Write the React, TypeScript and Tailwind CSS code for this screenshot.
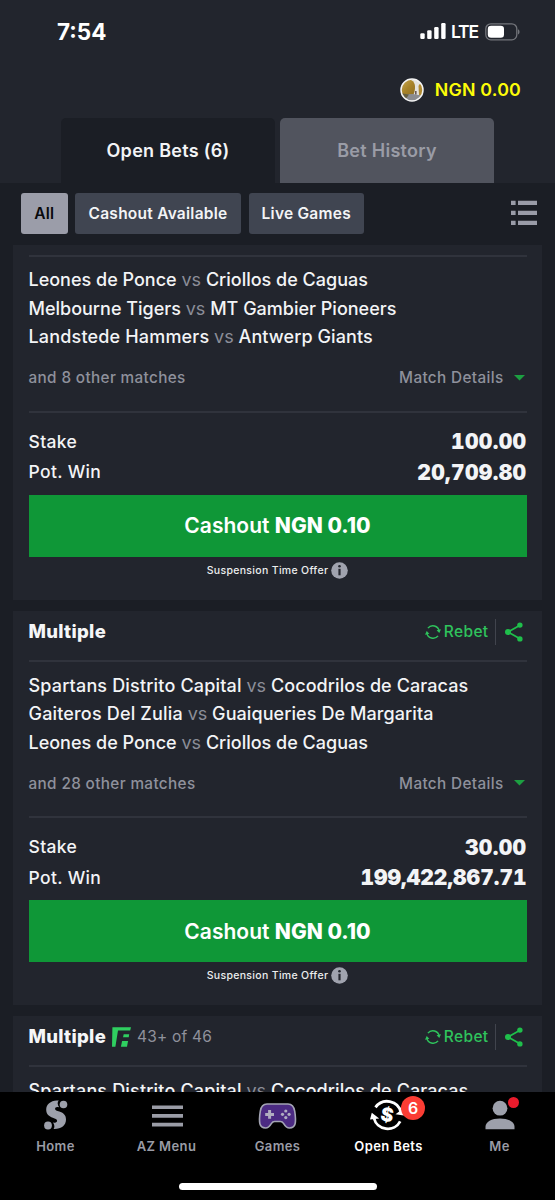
import { ReactNode } from "react";

type Match = { home: string; away: string; wide?: boolean };

function StatusBar() {
  return (
    <div className="flex h-[62px] items-center justify-between pt-px pr-[35px] pl-[57px] text-white">
      <span className="text-[22.5px] font-bold">7:54</span>
      <div className="flex items-center">
        <svg className="mb-px" width="26" height="16" viewBox="0 0 26 16" fill="currentColor">
          <rect x="0.3" y="10.2" width="4.4" height="5.8" rx="1.2" />
          <rect x="7.2" y="7.2" width="4.4" height="8.8" rx="1.2" />
          <rect x="14.2" y="4" width="4.4" height="12" rx="1.2" />
          <rect x="21.2" y="0" width="4.4" height="16" rx="1.2" />
        </svg>
        <span className="ml-[5px] pt-px text-[17.5px] font-semibold tracking-[-1.1px]">LTE</span>
        <svg className="ml-[7px]" width="35" height="18" viewBox="0 0 35 18">
          <rect x="0.8" y="0.8" width="31" height="16" rx="5" fill="none" stroke="#73757b" strokeWidth="1.3" />
          <rect x="2.8" y="2.8" width="16.2" height="12" rx="3.3" fill="#fff" />
          <path d="M33 6.3c2 .8 2 4.400 0 5.200z" fill="#73757b" />
        </svg>
      </div>
    </div>
  );
}

function Avatar() {
  return (
    <svg width="24" height="24" viewBox="0 0 24 24">
      <defs>
        <clipPath id="avatar">
          <circle cx="12" cy="12" r="10.8" />
        </clipPath>
        <linearGradient id="foliage" x1="0" y1="0" x2="1" y2="1">
          <stop offset="0" stopColor="#c9ab55" />
          <stop offset="0.5" stopColor="#a8842a" />
          <stop offset="1" stopColor="#8d6d22" />
        </linearGradient>
      </defs>
      <g clipPath="url(#avatar)">
        <rect width="24" height="24" fill="#e4e3df" />
        <path d="M0 2h11c3 1.500 4 4 4 7 0 3-.5 5-1.500 7.500L0 18z" fill="url(#foliage)" />
        <path d="M18.500 8c.5-2 2-3.500 5.500-3v14l-5-1.500z" fill="#b08b33" />
        <path d="M0 16.500l13-.5 11 2v6H0z" fill="#8b8c90" />
        <path d="M0 15l9 1.500L5 22H0z" fill="#665f40" />
        <path d="M15 13h1.600v3.500H15z" fill="#6a5a57" />
      </g>
      <circle cx="12" cy="12" r="11" fill="none" stroke="#f4f4f4" strokeWidth="1.500" />
    </svg>
  );
}

function ListIcon() {
  return (
    <svg className="mb-[2px]" width="26" height="26" viewBox="0 0 26 26" fill="#9a9ca8">
      <path d="M0 .7h4.600v4.400H0zM7 .7h19v4.400H7zM0 10.700h4.600v4.400H0zM7 10.700h19v4.400H7zM0 20.700h4.600v4.400H0zM7 20.700h19v4.400H7z" />
    </svg>
  );
}

function RebetIcon() {
  return (
    <svg width="16" height="16" viewBox="0 0 16 16" fill="none" stroke="#2fc35c" strokeWidth="1.400">
      <path d="M2.900 4.100A6.400 6.400 0 0 1 14.200 7.200" />
      <path d="M13.100 11.900A6.400 6.400 0 0 1 1.800 8.800" />
      <path d="M11.600 6.200l4.400-.9-1.700 3.600z" fill="#2fc35c" stroke="none" />
      <path d="M4.400 9.800L0 10.700l1.700-3.600z" fill="#2fc35c" stroke="none" />
    </svg>
  );
}

function ShareIcon() {
  return (
    <svg width="18" height="20" viewBox="0 0 18 20" fill="#1fbf4b" stroke="#1fbf4b">
      <path d="M15 3.200L3 10l12 6.800" fill="none" strokeWidth="1.700" />
      <circle cx="14.900" cy="3.100" r="2.700" stroke="none" />
      <circle cx="3" cy="10" r="3" stroke="none" />
      <circle cx="14.900" cy="16.900" r="2.700" stroke="none" />
    </svg>
  );
}

function FlexIcon() {
  return (
    <svg className="ml-[6px]" width="19" height="20" viewBox="0 0 19 20" fill="#2fcf60">
      <path d="M.4.200H19l-.8 3.300H6L3.400 19.800H0z" />
      <path d="M11.700 7.200h5.500l-.5 3.100H11z" />
      <path d="M10.100 14h6l-1.100 5.800H8.900z" />
    </svg>
  );
}

function InfoIcon() {
  return (
    <svg className="ml-[3px]" width="17" height="17" viewBox="0 0 17 17">
      <circle cx="8.500" cy="8.500" r="8.300" fill="#a0a3ae" />
      <circle cx="8.500" cy="4.300" r="1.300" fill="#252830" />
      <path d="M7.400 6.800h2.200v6.500H7.400z" fill="#252830" />
    </svg>
  );
}

function CardHeader({ children }: { children?: ReactNode }) {
  return (
    <div className="flex h-[49px] items-center justify-between pb-[7px]">
      <div className="flex items-center">
        <span className="pb-px text-[18.5px] font-extrabold tracking-[0.3px] text-[#f5f6f8]">Multiple</span>
        {children}
      </div>
      <div className="flex items-center pr-[4px]">
        <RebetIcon />
        <span className="ml-[3px] text-[15.5px] font-medium tracking-[0.35px] text-[#2fc35c]">Rebet</span>
        <span className="ml-[6px] h-[26px] w-px bg-[#41444d]" />
        <span className="ml-[9px]">
          <ShareIcon />
        </span>
      </div>
    </div>
  );
}

function Matches({ items }: { items: Match[] }) {
  return (
    <div className="border-t-2 border-[#30333c] pt-[9.5px]">
      {items.map(({ home, away, wide }) => (
        <p key={home} className="h-[28.5px] text-[18px] leading-[28.5px] font-medium whitespace-nowrap text-[#f3f4f6]">
          <span className={wide ? "tracking-[0.17px]" : ""}>{home}</span> <span className="font-normal text-[#8b8d98]">vs</span>{" "}
          <span className={wide ? "tracking-[0.08px]" : ""}>{away}</span>
        </p>
      ))}
    </div>
  );
}

function TotalRow({ label, value }: { label: string; value: string }) {
  const tracking = value.length > 10 ? "tracking-[0.02px]" : "tracking-[0.35px]";
  return (
    <div className="flex h-[30.5px] items-center justify-between text-[#f3f4f6]">
      <span className="text-[17.5px] font-medium tracking-[0.35px]">{label}</span>
      <span className={`text-[21px] font-black tabular-nums ${tracking}`}>{value}</span>
    </div>
  );
}

function Totals({ others, stake, win }: { others: number; stake: string; win: string }) {
  return (
    <>
      <div className="mt-[13px] flex h-[28px] items-center justify-between text-[15.3px] font-medium tracking-[0.36px] text-[#8f919c]">
        <span>and {others} other matches</span>
        <span className="flex items-center pr-[2px]">
          Match Details
          <svg className="mb-[2px] ml-[10px]" width="11" height="6" viewBox="0 0 11 6" fill="#1c9f41">
            <path d="M0 0h11L5.500 5.500z" />
          </svg>
        </span>
      </div>
      <div className="mt-[18px] border-t-2 border-[#30333c] pt-[14px]">
        <TotalRow label="Stake" value={stake} />
        <TotalRow label="Pot. Win" value={win} />
      </div>
      <button className="mt-[7px] block h-[62px] w-full bg-[#0f9737] pt-px text-[21px] font-semibold tracking-[0.02px] text-white">
        Cashout <span className="font-extrabold">NGN 0.10</span>
      </button>
      <div className="flex h-[27px] items-center justify-center text-[10.5px] font-medium tracking-[0.32px] text-[#eceded]">
        <span className="pt-px">Suspension Time Offer</span>
        <InfoIcon />
      </div>
    </>
  );
}

function NavItem({ label, active, children }: { label: string; active?: boolean; children: ReactNode }) {
  return (
    <div className={active ? "flex flex-1 flex-col items-center text-white" : "flex flex-1 flex-col items-center text-[#9a9ca6]"}>
      <div className="flex h-[45px] items-center justify-center">{children}</div>
      <span className="text-[13px] leading-[18px] font-semibold tracking-[0.4px]">{label}</span>
    </div>
  );
}

function BottomNav() {
  return (
    <nav className="flex h-[108px] shrink-0 flex-col items-center justify-between bg-black pb-[10px]">
      <div className="flex w-full">
        <NavItem label="Home">
          <svg width="24" height="30" viewBox="0 0 24 30" fill="#9da0ab">
            <circle cx="19.500" cy="4.500" r="3.800" />
            <circle cx="4" cy="25.500" r="3.900" />
            <path d="M12.800.6C6.500.9 2.200 4.600 2.200 9.800c0 4.600 3 6.700 6.600 8 2.500.9 4.300 1.500 4.300 3 0 1-.8 1.800-2.300 1.900-1.200 0-1.800-.2-1.800-.2 1.800 2.500 1.700 5 .6 6.500 7.500.3 12.400-3.500 12.400-9.500 0-4.700-3-6.700-6.700-7.900-2.600-.9-4.200-1.400-4.200-2.700 0-1 .8-1.700 2.300-1.800 1.200 0 1.900.3 1.900.3-2-2.400-2.200-5.300-.5-6.800-.7-.1-1.300-.1-2 0z" />
          </svg>
        </NavItem>
        <NavItem label="AZ Menu">
          <svg className="mt-[3px] ml-px" width="31" height="22" viewBox="0 0 31 22" fill="#9a9ca6">
            <path d="M0 .4h31v3.700H0zM0 9.100h31v3.700H0zM0 17.800h31v3.700H0z" />
          </svg>
        </NavItem>
        <NavItem label="Games">
          <svg className="mt-[3px]" width="39" height="26" viewBox="0 0 38 26">
            <path d="M8.500 1h21c4.300 0 6 2.700 6.700 7.200.8 5 1.100 9.600.4 12.600-.7 3-3 4.200-5.600 4.200-3 0-4.600-2.200-6-4.600-.8-1.300-1.600-1.900-3-1.900h-6c-1.400 0-2.200.6-3 1.900-1.400 2.400-3 4.600-6 4.600-2.600 0-4.900-1.200-5.600-4.200-.7-3-.4-7.600.4-12.600C2.500 3.700 4.200 1 8.500 1z" fill="#4b2a82" stroke="#a3a4b3" strokeWidth="1.600" />
            <path d="M9.600 7h3v2.900h2.900v3h-2.900v2.900h-3v-2.900H6.700v-3h2.900z" fill="#b0adc0" />
            <g fill="#b0adc0">
              <circle cx="27.300" cy="8" r="1.600" />
              <circle cx="27.300" cy="14.600" r="1.600" />
              <circle cx="24" cy="11.300" r="1.600" />
              <circle cx="30.600" cy="11.300" r="1.600" />
            </g>
          </svg>
        </NavItem>
        <NavItem label="Open Bets" active>
          <div className="relative mr-[3px]">
            <svg width="34" height="33" viewBox="0 0 34 33" fill="none" stroke="#fff" strokeWidth="2.800">
              <path d="M5.500 9.400A14.200 14.200 0 0 1 31 14.500" />
              <path d="M30.200 23.300A14.200 14.200 0 0 1 3.900 20" />
              <path d="M25.500 16.200l8.300 1.400V10z" fill="#fff" stroke="none" />
              <path d="M0 21.600l1.800-6.800 7.400 5.600z" fill="#fff" stroke="none" />
              <text x="17.300" y="23.500" textAnchor="middle" fontSize="19" fontWeight="900" fontFamily="Inter, sans-serif" fill="#fff" stroke="none" transform="rotate(10 17.300 16.500)">
                $
              </text>
            </svg>
            <span className="absolute top-[-2px] left-[31px] flex size-[24px] items-center justify-center rounded-full bg-[#fb3d34] text-[16px] leading-none font-semibold text-white">6</span>
          </div>
        </NavItem>
        <NavItem label="Me">
          <div className="relative">
            <svg width="30" height="30" viewBox="0 0 30 30" fill="#9da0ab">
              <circle cx="15" cy="8.200" r="7.400" />
              <path d="M.5 29.300v-2.500c0-5 6-8.300 14.500-8.300s14.500 3.300 14.500 8.300v2.500z" />
            </svg>
            <span className="absolute top-[-3px] left-[23px] size-[11px] rounded-full bg-[#ea1b2c]" />
          </div>
        </NavItem>
      </div>
      <div className="h-[7px] w-[198px] rounded-full bg-white" />
    </nav>
  );
}

export default function App() {
  return (
    <div className="flex h-[1200px] w-[555px] flex-col overflow-hidden bg-[#1b1e25] font-[Inter,sans-serif]">
      <header className="h-[183px] shrink-0 bg-[#22252d]">
        <StatusBar />
        <div className="flex h-[56px] items-center justify-end pr-[34px] pb-px">
          <Avatar />
          <span className="ml-[11px] pt-px text-[17.8px] font-semibold tracking-[0.2px] text-[#fdfd08]">NGN 0.00</span>
        </div>
        <div className="flex gap-[5px] pl-[61px] text-[18px] font-semibold tracking-[0.28px]">
          <div className="flex h-[65px] w-[214px] items-center justify-center rounded-t-[5px] bg-[#1b1e25] text-[#f3f4f6]">Open Bets (6)</div>
          <div className="flex h-[65px] w-[214px] items-center justify-center rounded-t-[5px] bg-[#51545e] text-[#9a9ca6]">Bet History</div>
        </div>
      </header>
      <div className="flex h-[62px] shrink-0 items-center justify-between pr-[18px] pb-px pl-[21px] text-[15.5px] font-semibold tracking-[0.25px] text-[#f3f4f6]">
        <div className="flex gap-[7.5px]">
          <span className="flex h-[41.5px] w-[46.5px] items-center justify-center rounded-[3px] bg-[#9b9da9] text-[#08090c]">All</span>
          <span className="flex h-[41.5px] w-[166px] items-center justify-center rounded-[3px] bg-[#404551]">Cashout Available</span>
          <span className="flex h-[41.5px] w-[115.5px] items-center justify-center rounded-[3px] bg-[#404551]">Live Games</span>
        </div>
        <ListIcon />
      </div>
      <main className="flex min-h-0 flex-1 flex-col gap-[11px] overflow-hidden px-[13px]">
        <section className="h-[355px] shrink-0 bg-[#22252d] px-[15.5px] pt-[9.5px]">
          <Matches
            items={[
              { home: "Leones de Ponce", away: "Criollos de Caguas" },
              { home: "Melbourne Tigers", away: "MT Gambier Pioneers" },
              { home: "Landstede Hammers", away: "Antwerp Giants", wide: true },
            ]}
          />
          <Totals others={8} stake="100.00" win="20,709.80" />
        </section>
        <section className="h-[394px] shrink-0 bg-[#22252d] px-[15.5px]">
          <CardHeader />
          <Matches
            items={[
              { home: "Spartans Distrito Capital", away: "Cocodrilos de Caracas", wide: true },
              { home: "Gaiteros Del Zulia", away: "Guaiqueries De Margarita", wide: true },
              { home: "Leones de Ponce", away: "Criollos de Caguas" },
            ]}
          />
          <Totals others={28} stake="30.00" win="199,422,867.71" />
        </section>
        <section className="h-[394px] shrink-0 bg-[#22252d] px-[15.5px]">
          <CardHeader>
            <FlexIcon />
            <span className="ml-[6px] text-[15.5px] tracking-[0.2px] text-[#8f919c]">43+ of 46</span>
          </CardHeader>
          <Matches items={[{ home: "Spartans Distrito Capital", away: "Cocodrilos de Caracas", wide: true }]} />
        </section>
      </main>
      <BottomNav />
    </div>
  );
}
